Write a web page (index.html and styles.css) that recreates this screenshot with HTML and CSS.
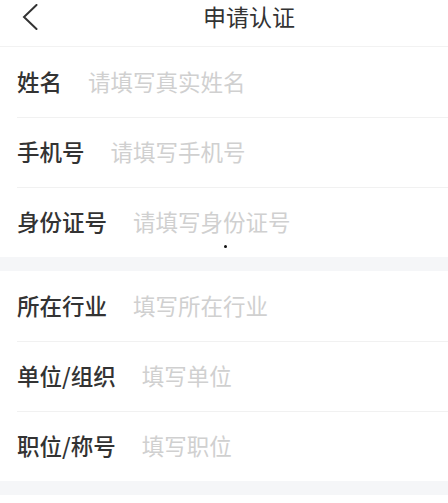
FILE: index.html
```html
<!DOCTYPE html>
<html lang="zh-CN">
<head>
<meta charset="utf-8">
<title>申请认证</title>
<link rel="stylesheet" href="styles.css">
</head>
<body>
<div class="page">
  <header class="nav">
    <span class="back">
      <svg width="16" height="26" viewBox="0 0 16 26"><path d="M14.5 1 L2 13 L14.5 25" fill="none" stroke="#333" stroke-width="2" stroke-linejoin="miter" stroke-linecap="round"/></svg>
    </span>
    <h1 class="title">申请认证</h1>
  </header>

  <section class="group">
    <div class="row"><span class="label">姓名</span><span class="ph">请填写真实姓名</span></div>
    <div class="row"><span class="label">手机号</span><span class="ph">请填写手机号</span></div>
    <div class="row"><span class="label">身份证号</span><span class="ph">请填写身份证号</span></div>
    <span class="dot"></span>
  </section>
  <div class="gap"></div>
  <section class="group">
    <div class="row"><span class="label">所在行业</span><span class="ph">填写所在行业</span></div>
    <div class="row"><span class="label">单位/组织</span><span class="ph">填写单位</span></div>
    <div class="row"><span class="label">职位/称号</span><span class="ph">填写职位</span></div>
  </section>
  <div class="gap"></div>
</div>
</body>
</html>
```

FILE: styles.css
```css
html, body {
  margin: 0;
  padding: 0;
  background: #ffffff;
}
body {
  font-family: "Noto Sans CJK SC", "Noto Sans", sans-serif;
  color: #333333;
}
.page {
  width: 448px;
  min-height: 503px;
  background: #fff;
}
.nav {
  height: 46px;
  border-bottom: 1px solid #f2f2f2;
  display: flex;
  align-items: flex-start;
  position: relative;
}
.back {
  display: flex;
  margin-left: 22px;
  margin-top: 4px;
}
.title {
  margin: 0;
  margin-left: 165px;
  margin-top: 0;
  font-size: 23px;
  line-height: 33px;
  font-weight: 400;
  color: #333;
}
.group {
  position: relative;
}
.row {
  height: 70px;
  display: flex;
  align-items: center;
  padding-left: 17px;
  position: relative;
}
.row + .row::before {
  content: "";
  position: absolute;
  left: 17px;
  right: 0;
  top: 0;
  height: 1px;
  background: #f1f1f1;
}
.label {
  font-size: 22.5px;
  line-height: 30px;
  margin-top: -2px;
  font-weight: 500;
  color: #333;
  margin-right: 26px;
  white-space: nowrap;
}
.ph {
  font-size: 22.5px;
  line-height: 30px;
  margin-top: -2px;
  color: #d0d0d0;
  white-space: nowrap;
}
.gap {
  height: 14px;
  background: #f5f6f8;
}
.dot {
  position: absolute;
  left: 224px;
  top: 198px;
  width: 3px;
  height: 3px;
  border-radius: 50%;
  background: #111;
}
```
